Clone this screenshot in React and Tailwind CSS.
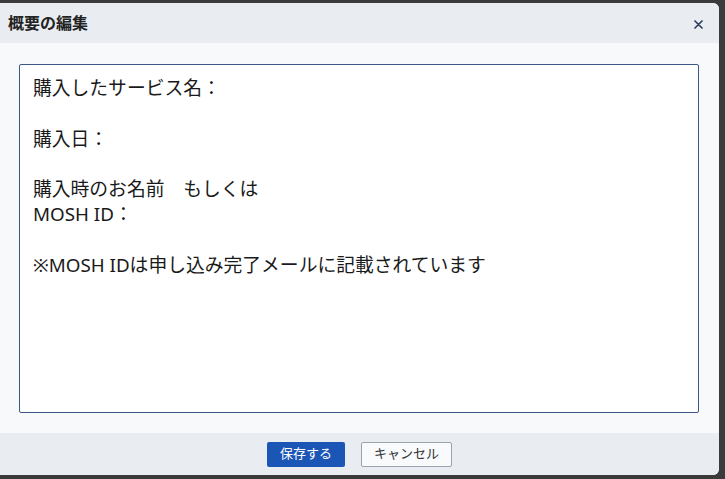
import { useState } from "react";

const initialText = `購入したサービス名：

購入日：

購入時のお名前　もしくは
MOSH ID：

※MOSH IDは申し込み完了メールに記載されています`;

const App = () => {
  const [summary, setSummary] = useState(initialText);

  return (
    <div
      className="w-[725px] h-[479px] bg-[#3a3a3a] pt-[3px] pr-[6px] pb-[4px] overflow-hidden"
      style={{ fontFamily: '"Noto Sans", "Noto Sans CJK JP", sans-serif' }}
    >
      <div className="flex flex-col h-full bg-[#f7f9fb] rounded-tr-[6px] rounded-br-[6px] overflow-hidden">
        {/* header */}
        <div className="flex items-center justify-between h-[40px] px-[8px] bg-[#e9edf2] shrink-0">
          <h2 className="text-[16px] font-bold text-[#222]">概要の編集</h2>
          <button className="w-[20px] h-[20px] mr-[3px] mt-[2px] flex items-center justify-center text-[#2f3f63]">
            <svg width="9" height="9" viewBox="0 0 9 9">
              <path d="M1 1 L8 8 M8 1 L1 8" stroke="currentColor" strokeWidth="1.7" strokeLinecap="round" />
            </svg>
          </button>
        </div>

        {/* body */}
        <div className="flex-1 pt-[21px] pb-[20px] pl-[19px] pr-[20px]">
          <textarea
            value={summary}
            onChange={(e) => setSummary(e.target.value)}
            className="block w-full h-full resize-none bg-white border border-[#3d5688] rounded-[2px] px-[13px] pt-[11px] text-[18.8px] leading-[25.3px] text-[#1a1a1a] outline-none"
          />
        </div>

        {/* footer */}
        <div className="flex items-center justify-center gap-[16px] h-[42px] bg-[#e9edf2] shrink-0">
          <button className="w-[78px] h-[25px] bg-[#1b55b6] text-white text-[13px] rounded-[2px]">
            保存する
          </button>
          <button className="w-[91px] h-[25px] bg-[#f8fafc] border border-[#9aa3ad] text-[#333] text-[13px] rounded-[2px]">
            キャンセル
          </button>
        </div>
      </div>
    </div>
  );
};

export default App;
